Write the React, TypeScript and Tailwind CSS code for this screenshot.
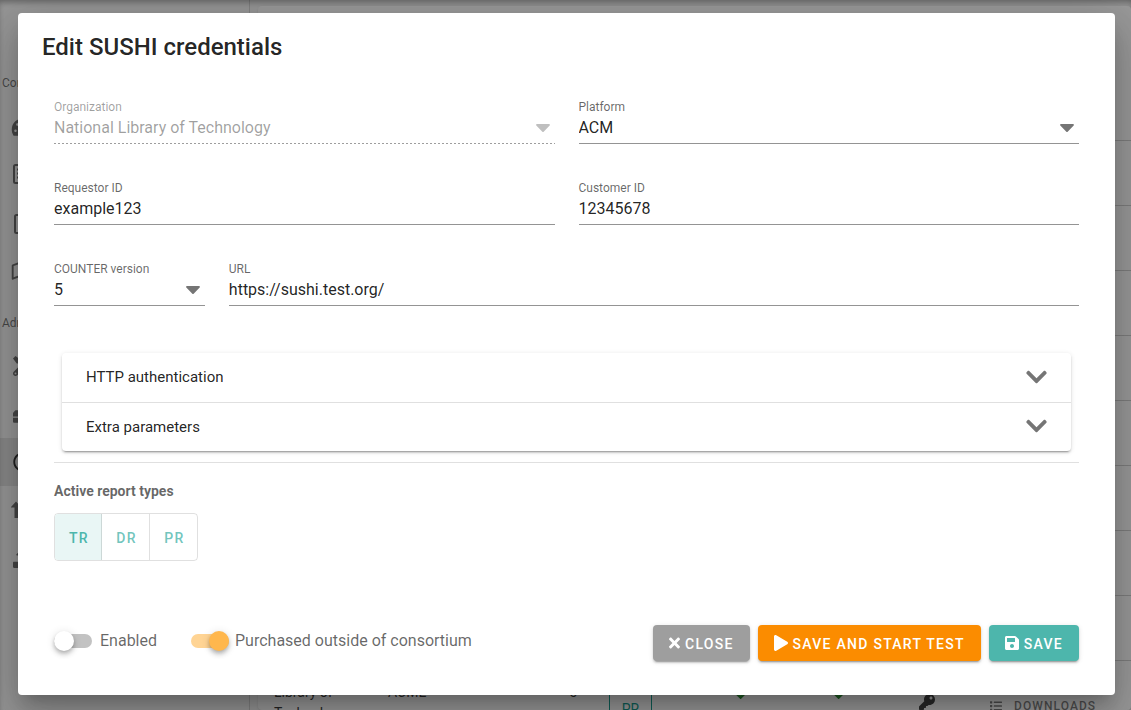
import { useState, type ReactNode } from "react";
import {
  FaCaretDown,
  FaCheck,
  FaChevronDown,
  FaKey,
  FaList,
  FaPlay,
  FaRegCircle,
  FaRegMap,
  FaSave,
  FaTachometerAlt,
  FaTimes,
  FaToolbox,
  FaTools,
  FaUpload,
} from "react-icons/fa";

function NavItem({ children, active = false }: { children: ReactNode; active?: boolean }) {
  return (
    <li className={active ? "flex h-12 items-center bg-black/10 pl-[11px] text-black/85" : "flex h-12 items-center pl-[11px] text-black/60"}>
      <span className="flex w-6 justify-center">{children}</span>
    </li>
  );
}

function ReportIcon() {
  return (
    <svg viewBox="0 0 20 22" className="h-[22px] w-5" fill="none" stroke="currentColor" strokeWidth="2">
      <rect x="1" y="1" width="18" height="18" rx="1.5" />
      <path d="M4 5.500h2M4 9.500h2M4 13.500h2M8 5.500h7M8 9.500h7M8 13.500h7" />
    </svg>
  );
}

function PageIcon() {
  return (
    <svg viewBox="0 0 18 22" className="h-[22px] w-[18px]" fill="none" stroke="currentColor" strokeWidth="2">
      <rect x="1" y="3" width="16" height="18" rx="1.5" />
    </svg>
  );
}

function TransferIcon() {
  return (
    <svg viewBox="0 0 24 20" className="h-5 w-6" fill="currentColor">
      <path d="M5 1.500 10.500 7.500H7V18H3.500V7.500H-0.500z" />
      <path d="M18 18.500 12 12.500h4V2h4v10.500h4z" />
    </svg>
  );
}

function Sidebar() {
  return (
    <nav className="w-[250px] shrink-0 border-r border-black/15 pt-[63px]">
      <p className="flex h-10 items-center pl-0.5 text-xs text-black/60">Content</p>
      <ul>
        <NavItem><FaTachometerAlt className="h-5 w-6" /></NavItem>
        <NavItem><ReportIcon /></NavItem>
        <NavItem><PageIcon /></NavItem>
        <NavItem><FaRegMap className="h-5 w-6" /></NavItem>
      </ul>
      <p className="mt-2 flex h-10 items-center pl-0.5 text-xs text-black/60">Administration</p>
      <ul className="-mt-px">
        <NavItem><FaTools className="size-5" /></NavItem>
        <NavItem><FaToolbox className="size-5" /></NavItem>
        <NavItem active><FaRegCircle className="size-5" /></NavItem>
        <NavItem><TransferIcon /></NavItem>
        <NavItem><FaUpload className="size-5" /></NavItem>
      </ul>
    </nav>
  );
}

function CredentialsTable() {
  const emptyRows = [0, 1, 2, 3, 4, 5, 6, 7];
  return (
    <main className="min-w-0 flex-1 pt-1.5 pl-2">
      <div className="h-full rounded bg-white pt-[134px] shadow-sm">
        <table className="w-full table-fixed text-sm text-black/85">
          <colgroup>
            <col className="w-[114px]" />
            <col className="w-[110px]" />
            <col className="w-[111px]" />
            <col className="w-[99px]" />
            <col className="w-[98px]" />
            <col className="w-[98px]" />
            <col className="w-[78px]" />
            <col />
          </colgroup>
          <tbody>
            {emptyRows.map((row) => (
              <tr key={row} className="h-[65px] border-t border-black/20">
                <td colSpan={8} />
              </tr>
            ))}
            <tr className="h-[65px] border-t border-black/20 align-top">
              <td className="px-4 pt-[21px] leading-[21px]">Library of Technology</td>
              <td className="px-4 pt-[21px] leading-[21px]">ACME</td>
              <td className="px-4 pt-[21px] text-right leading-[21px]">5</td>
              <td className="px-4">
                <span className="flex h-16 w-[43px] items-end justify-center border-x border-[#009688] pb-1.5 text-sm text-[#009688]">PR</span>
              </td>
              <td className="pt-[25px] pl-0.5"><FaCheck className="mx-auto size-[15px] text-[#1b8a24]" /></td>
              <td className="pt-[25px] pl-0.5"><FaCheck className="mx-auto size-[15px] text-[#1b8a24]" /></td>
              <td className="pt-[33px]"><FaKey className="mx-auto size-4 text-black/80" /></td>
              <td className="pt-[35px] pl-6">
                <button type="button" className="flex items-center gap-3 text-xs leading-5 font-medium tracking-[0.09em] text-black/55">
                  <FaList className="size-3" />
                  DOWNLOADS
                </button>
              </td>
            </tr>
          </tbody>
        </table>
      </div>
    </main>
  );
}

function TextField({ id, label, value, className }: { id: string; label: string; value: string; className: string }) {
  return (
    <div className={className}>
      <label htmlFor={id} className="block h-4 text-xs leading-4 text-black/60">{label}</label>
      <input
        id={id}
        type="text"
        defaultValue={value}
        className="block h-[29px] w-full border-b border-black/42 pb-1 text-base text-black/87 outline-none"
      />
    </div>
  );
}

function SelectField({
  id,
  label,
  value,
  className,
  disabled = false,
}: {
  id: string;
  label: string;
  value: string;
  className: string;
  disabled?: boolean;
}) {
  return (
    <div className={className}>
      <label htmlFor={id} className={disabled ? "block h-4 text-xs leading-4 text-black/38" : "block h-4 text-xs leading-4 text-black/60"}>
        {label}
      </label>
      <div className="relative">
        <select
          id={id}
          disabled={disabled}
          defaultValue={value}
          className="block h-7 w-full appearance-none pb-0.5 text-base text-black/87 opacity-100 outline-none disabled:text-black/38"
        >
          <option>{value}</option>
        </select>
        <FaCaretDown
          className={
            disabled
              ? "pointer-events-none absolute top-0 right-0 size-6 text-black/25"
              : "pointer-events-none absolute top-0 right-0 size-6 text-black/54"
          }
        />
      </div>
      <div
        className={
          disabled
            ? "h-px bg-[repeating-linear-gradient(to_right,rgba(0,0,0,0.38)_0px,rgba(0,0,0,0.38)_2px,transparent_2px,transparent_4px)]"
            : "h-px bg-black/42"
        }
      />
    </div>
  );
}

function Panel({ title }: { title: string }) {
  return (
    <button type="button" aria-expanded="false" className="flex h-12 w-full items-center justify-between px-6 text-[15px] text-black/87 first:h-[50px]">
      {title}
      <FaChevronDown className="mb-0.5 h-6 w-[21px] text-black/54" />
    </button>
  );
}

function Switch({ label, initial, className }: { label: string; initial: boolean; className: string }) {
  return (
    <label className={className}>
      <input
        type="checkbox"
        role="switch"
        defaultChecked={initial}
        className="relative h-5 w-[38px] shrink-0 appearance-none before:absolute before:inset-x-0 before:top-[3px] before:h-3.5 before:rounded-full before:bg-black/24 after:absolute after:top-0 after:left-0 after:size-5 after:rounded-full after:bg-white after:shadow-[0_2px_4px_-1px_rgba(0,0,0,0.2),0_4px_5px_rgba(0,0,0,0.14),0_1px_10px_rgba(0,0,0,0.12)] checked:before:bg-[#ffb74d]/60 checked:after:left-[18px] checked:after:bg-[#ffb74d]"
      />
      {label}
    </label>
  );
}

function ReportTypes() {
  const [active, setActive] = useState<string[]>(["TR"]);
  const toggle = (type: string) =>
    setActive(active.includes(type) ? active.filter((t) => t !== type) : [...active, type]);
  return (
    <div className="flex w-fit divide-x divide-black/12 overflow-hidden rounded border border-black/12">
      {["TR", "DR", "PR"].map((type) => (
        <button
          key={type}
          type="button"
          aria-pressed={active.includes(type)}
          onClick={() => toggle(type)}
          className={
            active.includes(type)
              ? "h-[46px] w-12 bg-[#e9f6f5] pt-0.5 pl-0.5 text-sm font-medium tracking-[0.09em] text-[#4db6ac] first:w-[47px] last:w-[47px]"
              : "h-[46px] w-12 pt-0.5 pl-0.5 text-sm font-medium tracking-[0.09em] text-[#4db6ac]/80 first:w-[47px] last:w-[47px]"
          }
        >
          {type}
        </button>
      ))}
    </div>
  );
}

function EditDialog() {
  return (
    <section
      role="dialog"
      aria-modal="true"
      aria-labelledby="dialog-title"
      className="min-w-0 flex-1 rounded bg-white pb-[34px] shadow-[0_11px_15px_-7px_rgba(0,0,0,0.2),0_24px_38px_3px_rgba(0,0,0,0.14),0_9px_46px_8px_rgba(0,0,0,0.12)]"
    >
      <h1 id="dialog-title" className="px-6 pt-[18px] text-2xl leading-8 font-medium text-black/87">
        Edit SUSHI credentials
      </h1>
      <form className="px-9 pt-9" onSubmit={(event) => event.preventDefault()}>
        <div className="grid grid-cols-12 gap-x-6 gap-y-9">
          <SelectField id="organization" label="Organization" value="National Library of Technology" className="col-span-6" disabled />
          <SelectField id="platform" label="Platform" value="ACM" className="col-span-6" />
          <TextField id="requestor" label="Requestor ID" value="example123" className="col-span-6" />
          <TextField id="customer" label="Customer ID" value="12345678" className="col-span-6" />
          <SelectField id="version" label="COUNTER version" value="5" className="col-span-2" />
          <TextField id="url" label="URL" value="https://sushi.test.org/" className="col-span-10" />
        </div>
        <div className="mx-2 mt-[47px] divide-y divide-black/12 rounded shadow-[0_3px_1px_-2px_rgba(0,0,0,0.2),0_2px_2px_rgba(0,0,0,0.14),0_1px_5px_rgba(0,0,0,0.12)]">
          <Panel title="HTTP authentication" />
          <Panel title="Extra parameters" />
        </div>
        <hr className="mt-[11px] border-black/12" />
        <h2 className="mt-[18px] text-sm leading-5 font-bold text-black/60">Active report types</h2>
        <div className="mt-3">
          <ReportTypes />
        </div>
        <div className="mt-16 flex items-center justify-between">
          <div className="flex items-center gap-[34px] pb-1 text-base text-black/60">
            <Switch label="Enabled" initial={false} className="flex items-center gap-2" />
            <Switch label="Purchased outside of consortium" initial className="flex items-center gap-1.5" />
          </div>
          <div className="flex gap-2 text-sm font-medium tracking-[0.09em] text-white">
            <button type="button" className="flex h-9 items-center gap-[5px] rounded bg-[#9e9e9e] px-4 pt-0.5 shadow-[0_3px_1px_-2px_rgba(0,0,0,0.2),0_2px_2px_rgba(0,0,0,0.14),0_1px_5px_rgba(0,0,0,0.12)]">
              <FaTimes className="mb-0.5 h-4 w-[11px]" />
              CLOSE
            </button>
            <button type="submit" className="flex h-9 items-center gap-[5px] rounded bg-[#fb8c00] px-4 pt-0.5 shadow-[0_3px_1px_-2px_rgba(0,0,0,0.2),0_2px_2px_rgba(0,0,0,0.14),0_1px_5px_rgba(0,0,0,0.12)]">
              <FaPlay className="mb-0.5 h-4 w-3.5" />
              SAVE AND START TEST
            </button>
            <button type="submit" className="flex h-9 items-center gap-[5px] rounded bg-[#4db6ac] px-4 pt-0.5 shadow-[0_3px_1px_-2px_rgba(0,0,0,0.2),0_2px_2px_rgba(0,0,0,0.14),0_1px_5px_rgba(0,0,0,0.12)]">
              <FaSave className="mb-0.5 h-4 w-3.5" />
              SAVE
            </button>
          </div>
        </div>
      </form>
    </section>
  );
}

export default function App() {
  return (
    <div className="relative h-screen overflow-hidden bg-[#fafafa] font-['Roboto',sans-serif]">
      <div className="flex h-full shadow-[inset_0_4px_6px_-2px_rgba(0,0,0,0.4)]">
        <Sidebar />
        <CredentialsTable />
      </div>
      <div className="absolute inset-0 flex items-start bg-[#212121]/46 pt-[13px] pr-4 pl-[18px]">
        <EditDialog />
      </div>
    </div>
  );
}
